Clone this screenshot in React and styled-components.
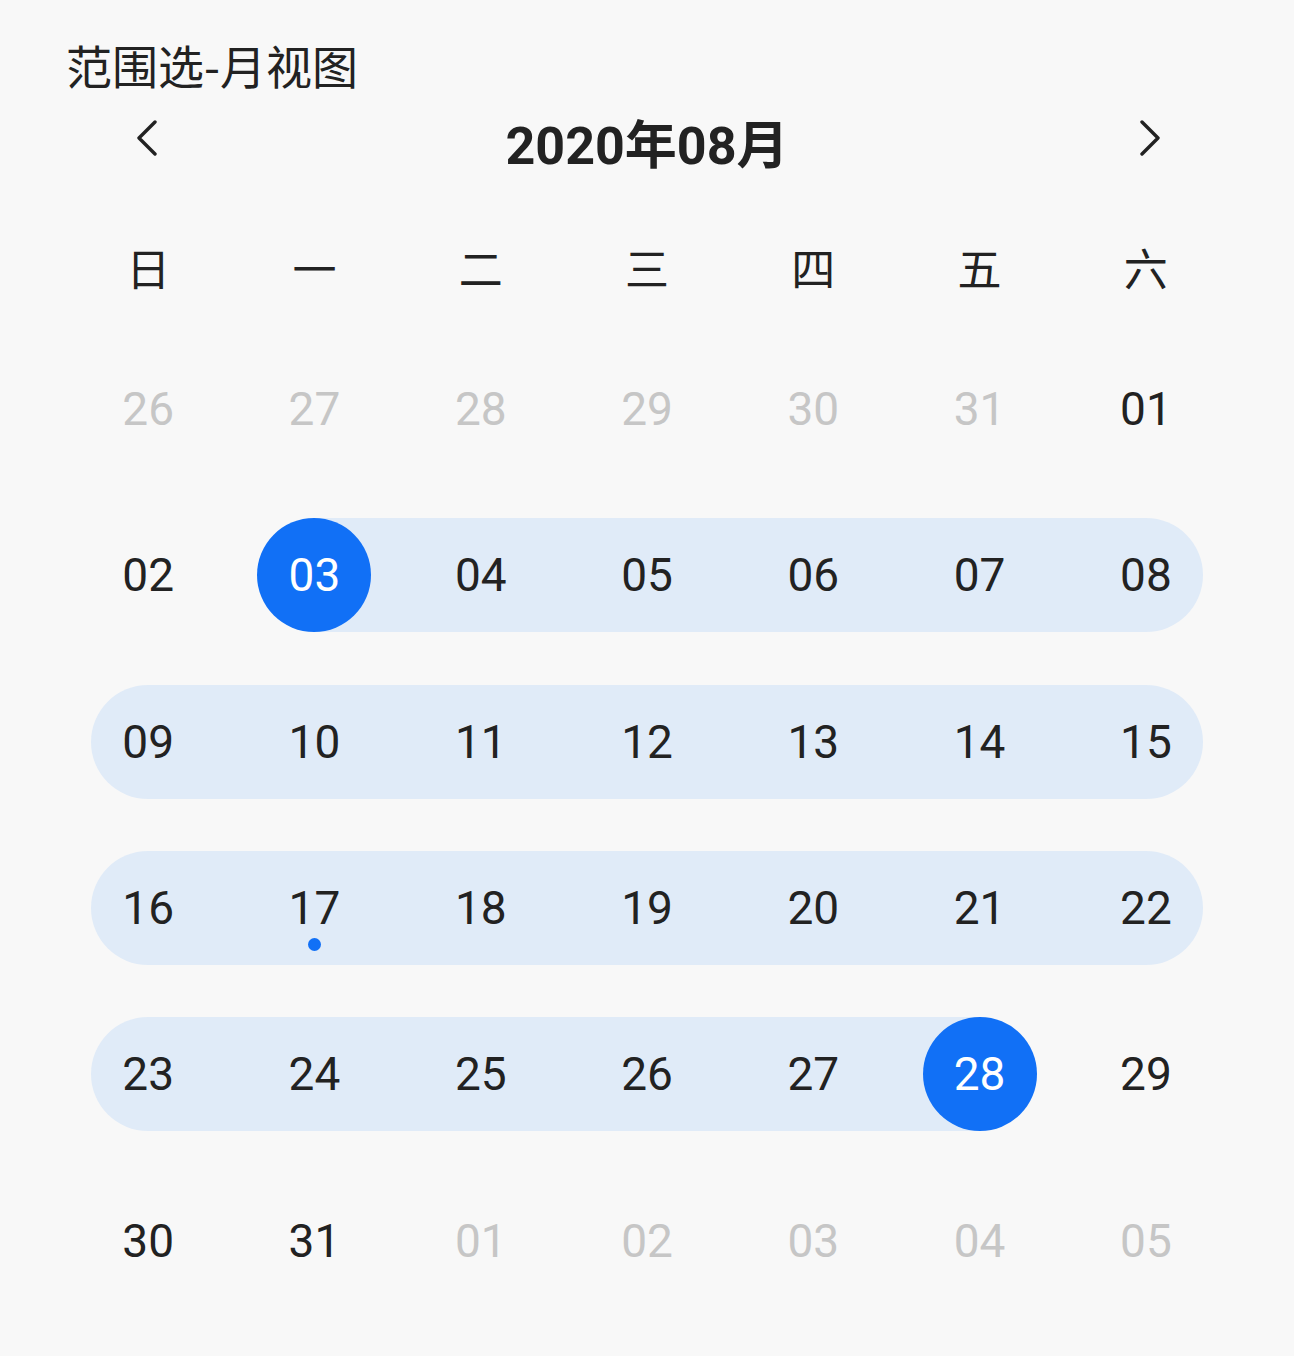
import React from 'react';
import styled, { createGlobalStyle, css } from 'styled-components';

const GlobalStyle = createGlobalStyle`
  body {
    margin: 0;
    background: #f8f8f8;
    font-family: Roboto, "Noto Sans CJK SC", sans-serif;
    color: #222;
  }
`;

const Page = styled.main`
  width: 1294px;
  min-height: 1356px;
  box-sizing: border-box;
  padding-top: 34px;
  background: #f8f8f8;
`;

const Title = styled.h1`
  margin: 0;
  padding-left: 66px;
  font-family: "Noto Sans CJK SC", sans-serif;
  font-size: 46px;
  font-weight: 400;
  line-height: 60px;
  color: #222;
`;

const Header = styled.div`
  display: grid;
  grid-template-columns: repeat(7, 1fr);
  align-items: center;
  height: 94px;
  padding: 0 65px;
`;

const NavButton = styled.button`
  grid-column: ${p => (p.$next ? 7 : 1)};
  justify-self: center;
  display: flex;
  padding: 0;
  margin: 0 ${p => (p.$next ? '0 6px 8px' : '2px 6px 0')};
  border: none;
  background: none;
  color: #222;
  cursor: pointer;
`;

const MonthLabel = styled.div`
  grid-column: 2 / 7;
  text-align: center;
  font-family: Roboto, "Noto Sans CJK SC", sans-serif;
  font-size: 52px;
  font-weight: 700;
  color: #222;
`;

const WeekRow = styled.div`
  display: grid;
  grid-template-columns: repeat(7, 1fr);
  padding: 23px 65px 0;
`;

const WeekDay = styled.div`
  text-align: center;
  line-height: 112px;
  font-family: "Noto Sans CJK SC", sans-serif;
  font-size: 44px;
  color: #222;
`;

const Grid = styled.div`
  display: grid;
  grid-template-columns: repeat(7, 1fr);
  padding: 3px 65px 0;
`;

const Cell = styled.div`
  display: grid;
  aspect-ratio: 1;
  align-items: center;
`;

const R = '57px';

const Band = styled.div`
  grid-area: 1 / 1;
  height: 114px;
  background: ${p => (p.$active ? '#e0ebf8' : 'transparent')};
  ${p => p.$start && css`margin-left: 50%;`}
  ${p => p.$end && css`margin-right: 50%;`}
  ${p => p.$rowStart && css`
    margin-left: calc(50% - ${R});
    border-top-left-radius: ${R};
    border-bottom-left-radius: ${R};
  `}
  ${p => p.$rowEnd && css`
    margin-right: calc(50% - ${R});
    border-top-right-radius: ${R};
    border-bottom-right-radius: ${R};
  `}
`;

const Day = styled.div`
  grid-area: 1 / 1;
  justify-self: center;
  position: relative;
  width: 114px;
  height: 114px;
  border-radius: 50%;
  display: flex;
  align-items: center;
  justify-content: center;
  font-size: 46px;
  color: ${p => (p.$selected ? '#fff' : p.$muted ? '#c6c6c6' : '#222')};
  background: ${p => (p.$selected ? '#1170f6' : 'transparent')};
`;

const TodayDot = styled.span`
  position: absolute;
  left: 50%;
  bottom: 14px;
  width: 13px;
  height: 13px;
  margin-left: -6.5px;
  border-radius: 50%;
  background: #1170f6;
`;

const Chevron = ({ dir }) => (
  <svg width="22" height="36" viewBox="0 0 22 36" fill="none">
    <polyline
      points={dir === 'left' ? '19,2 3,18 19,34' : '3,2 19,18 3,34'}
      stroke="currentColor"
      strokeWidth="3.4"
      strokeLinecap="round"
      strokeLinejoin="round"
    />
  </svg>
);

const weekDays = ['日', '一', '二', '三', '四', '五', '六'];

const pad = n => String(n).padStart(2, '0');

const buildDays = () => {
  const days = [];
  for (let d = 26; d <= 31; d++) days.push({ n: d, muted: true });
  for (let d = 1; d <= 31; d++) days.push({ n: d, muted: false });
  for (let d = 1; d <= 5; d++) days.push({ n: d, muted: true });
  return days;
};

const RANGE_START = 3;
const RANGE_END = 28;
const TODAY = 17;

const App = () => {
  const days = buildDays();

  return (
    <Page>
      <GlobalStyle />
      <Title>范围选-月视图</Title>

      <Header>
        <NavButton aria-label="上个月">
          <Chevron dir="left" />
        </NavButton>
        <MonthLabel>2020年08月</MonthLabel>
        <NavButton $next aria-label="下个月">
          <Chevron dir="right" />
        </NavButton>
      </Header>

      <WeekRow>
        {weekDays.map(w => (
          <WeekDay key={w}>{w}</WeekDay>
        ))}
      </WeekRow>

      <Grid>
        {days.map((day, i) => {
          const inMonth = !day.muted;
          const active = inMonth && day.n >= RANGE_START && day.n <= RANGE_END;
          const isStart = inMonth && day.n === RANGE_START;
          const isEnd = inMonth && day.n === RANGE_END;
          const col = i % 7;
          return (
            <Cell key={i}>
              <Band
                $active={active}
                $start={isStart}
                $end={isEnd}
                $rowStart={active && !isStart && col === 0}
                $rowEnd={active && !isEnd && col === 6}
              />
              <Day $muted={day.muted} $selected={isStart || isEnd}>
                {pad(day.n)}
                {inMonth && day.n === TODAY && <TodayDot />}
              </Day>
            </Cell>
          );
        })}
      </Grid>
    </Page>
  );
};

export default App;
